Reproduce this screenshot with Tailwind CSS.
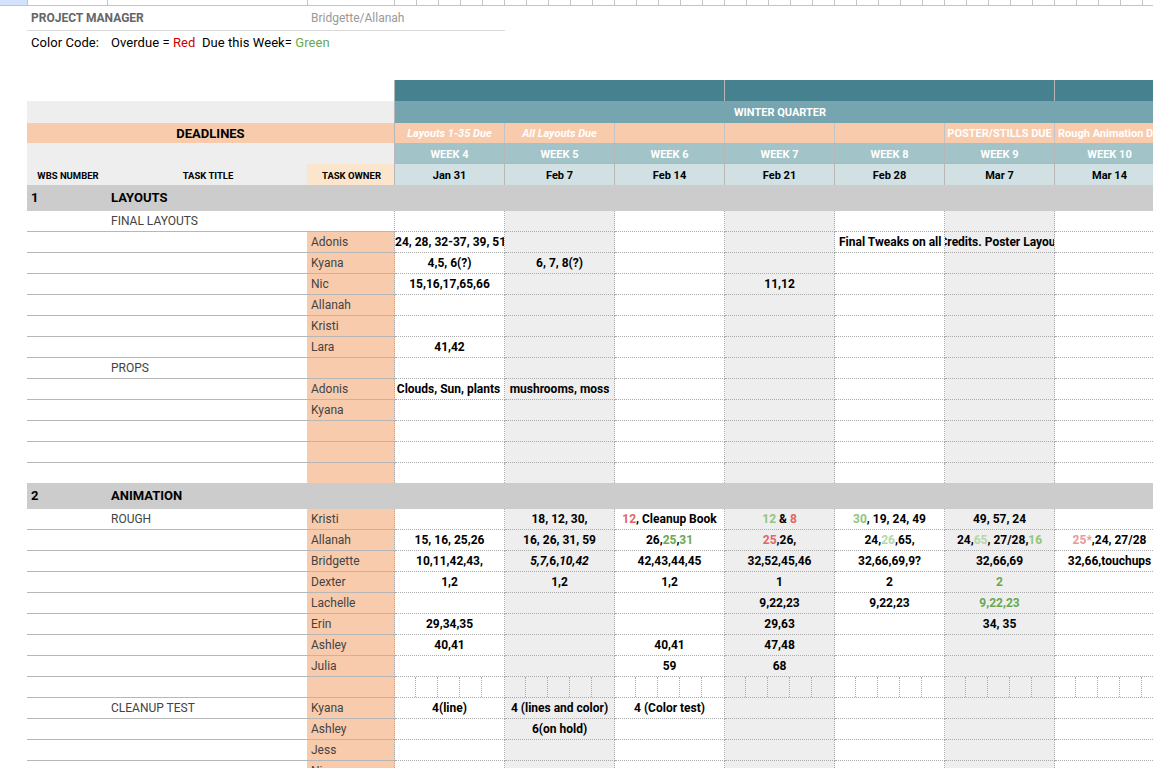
<!DOCTYPE html>
<html lang="en">

<head>
    <meta charset="UTF-8">
    <title>Production Schedule</title>
    <script src="https://cdn.jsdelivr.net/npm/@tailwindcss/browser@4"></script>
</head>

<body class="w-[1153px] h-[768px] overflow-hidden bg-white font-['Roboto',sans-serif] text-[12px] leading-[14px] text-black">
    <!-- frozen column strip -->
    <div class="flex h-[6px] border-b border-[#c4c4c4]">
        <div class="w-[28px] bg-[#d3e3fd] border-r border-[#c4c4c4]"></div>
        <div class="w-[80px] border-r border-[#c4c4c4]"></div>
        <div class="w-[200px] border-r border-[#c4c4c4]"></div>
        <div class="w-[87px] border-r border-[#c4c4c4]"></div>
        <div class="flex-1 bg-[repeating-linear-gradient(to_right,transparent_0,transparent_21px,#c4c4c4_21px,#c4c4c4_22px)]"></div>
    </div>

    <div class="ml-[27px]">
        <!-- project info -->
        <div class="w-[478px] h-[25px] flex items-center border-b border-[#d9d9d9] pl-[4px] text-[#666666]">
            <span class="w-[280px] font-bold">PROJECT MANAGER</span>
            <span class="text-[#999999]">Bridgette/Allanah</span>
        </div>
        <div class="h-[23px] flex items-center pl-[4px] whitespace-pre text-[13px] tracking-[0.06px]"><span class="w-[80px]">Color Code:</span>Overdue = <span class="text-[#cc0000]">Red</span>  Due this Week= <span class="text-[#6aa84f]">Green</span></div>
        <div class="h-[26px]"></div>

        <table class="table-fixed border-separate border-spacing-0 w-[1138px]">
            <colgroup>
                <col class="w-[80px]">
                <col class="w-[200px]">
                <col class="w-[88px]">
                <col class="w-[110px]">
                <col class="w-[110px]">
                <col class="w-[110px]">
                <col class="w-[110px]">
                <col class="w-[110px]">
                <col class="w-[110px]">
                <col class="w-[110px]">
            </colgroup>
            <thead class="[&_td]:p-0 [&_td]:pt-[2px] [&_td]:overflow-hidden [&_td]:whitespace-nowrap [&_td]:text-center">
                <tr class="h-[21px]">
                    <td colspan="3" class="border-r border-[#b7b7b7]"></td>
                    <td colspan="3" class="bg-[#45818e] border-r border-[#b7b7b7]"></td>
                    <td colspan="3" class="bg-[#45818e] border-r border-[#b7b7b7]"></td>
                    <td class="bg-[#45818e]"></td>
                </tr>
                <tr class="h-[22px]">
                    <td colspan="3" class="bg-[#eeeeee] border-r border-[#b7b7b7]"></td>
                    <td colspan="3" class="bg-[#76a5af]"></td>
                    <td class="bg-[#76a5af] text-white font-bold text-[11px]">WINTER QUARTER</td>
                    <td colspan="3" class="bg-[#76a5af]"></td>
                </tr>
                <tr class="h-[20px] text-white font-bold [&_td:nth-child(n+2)]:bg-[#f8cbad] [&_td:nth-child(n+2)]:border-r [&_td:nth-child(n+2)]:border-[#c4c4c4] text-[11px]">
                    <td colspan="3" class="bg-[#f8cbad] text-black text-[13px] border-r border-[#b7b7b7]">DEADLINES</td>
                    <td class="italic">Layouts 1-35 Due</td>
                    <td class="italic">All Layouts Due</td>
                    <td></td>
                    <td></td>
                    <td></td>
                    <td>POSTER/STILLS DUE</td>
                    <td class="text-left! pl-[3px]!">Rough Animation Due</td>
                </tr>
                <tr class="h-[21px] text-white font-bold text-[11px] [&_td:nth-child(n+2)]:pt-[3px] [&_td:nth-child(n+2)]:bg-[#a2c4c9] [&_td:nth-child(n+2)]:border-r [&_td:nth-child(n+2)]:border-b [&_td:nth-child(n+2)]:border-[#b7b7b7]">
                    <td colspan="3" class="bg-[#eeeeee] border-r border-[#b7b7b7]"></td>
                    <td>WEEK 4</td>
                    <td>WEEK 5</td>
                    <td>WEEK 6</td>
                    <td>WEEK 7</td>
                    <td>WEEK 8</td>
                    <td>WEEK 9</td>
                    <td>WEEK 10</td>
                </tr>
                <tr class="h-[21px] font-bold text-[9.5px] [&_td:nth-child(-n+3)]:pl-[2px] [&_td:nth-child(n+4)]:bg-[#d0e0e3] [&_td:nth-child(n+4)]:border-r [&_td:nth-child(n+4)]:border-[#b7b7b7] [&_td:nth-child(n+4)]:text-[11px]">
                    <td class="bg-[#eeeeee]">WBS NUMBER</td>
                    <td class="bg-[#eeeeee]">TASK TITLE</td>
                    <td class="bg-[#fce5cd] border-r border-[#b7b7b7]">TASK OWNER</td>
                    <td>Jan 31</td>
                    <td>Feb 7</td>
                    <td>Feb 14</td>
                    <td>Feb 21</td>
                    <td>Feb 28</td>
                    <td>Mar 7</td>
                    <td>Mar 14</td>
                </tr>
            </thead>
            <tbody class="[&_tr]:h-[21px] [&_td]:p-0 [&_td]:pl-[4px] [&_td]:overflow-hidden [&_td]:whitespace-nowrap [&_td]:border-b [&_td]:border-[#b7b7b7] [&_td]:text-[#434343] [&_td:nth-child(3)]:bg-[#f8cbad] [&_td:nth-child(3)]:border-r [&_td:nth-child(3)]:border-r-[#aaaaaa] [&_td:nth-child(3)]:[border-right-style:dotted]! [&_td:nth-child(n+4)]:border-r [&_td:nth-child(n+4)]:border-dotted [&_td:nth-child(n+4)]:border-[#aaaaaa] [&_td:nth-child(n+4)]:pl-0 [&_td:nth-child(n+4)]:text-center [&_td:nth-child(n+4)]:font-bold [&_td:nth-child(n+4)]:text-black [&_td:nth-child(5)]:bg-[#eeeeee] [&_td:nth-child(7)]:bg-[#eeeeee] [&_td:nth-child(9)]:bg-[#eeeeee]">
                <tr class="h-[26px]! bg-[#cccccc] text-[13px] font-bold">
                    <td class="border-b-0! text-black!">1</td>
                    <td colspan="9" class="border-b-0! text-black!">LAYOUTS</td>
                </tr>
                <tr>
                    <td></td>
                    <td>FINAL LAYOUTS</td>
                    <td class="bg-white!"></td>
                    <td></td><td></td><td></td><td></td><td></td><td></td><td></td>
                </tr>
                <tr>
                    <td></td><td></td><td>Adonis</td>
                    <td>24, 28, 32-37, 39, 51</td>
                    <td></td><td></td><td></td>
                    <td class="text-left! pl-[4px]!">Final Tweaks on all</td>
                    <td><div class="flex justify-center"><span class="shrink-0">Credits. Poster Layout</span></div></td>
                    <td></td>
                </tr>
                <tr>
                    <td></td><td></td><td>Kyana</td>
                    <td>4,5, 6(?)</td><td>6, 7, 8(?)</td>
                    <td></td><td></td><td></td><td></td><td></td>
                </tr>
                <tr>
                    <td></td><td></td><td>Nic</td>
                    <td>15,16,17,65,66</td><td></td><td></td><td>11,12</td>
                    <td></td><td></td><td></td>
                </tr>
                <tr>
                    <td></td><td></td><td>Allanah</td>
                    <td></td><td></td><td></td><td></td><td></td><td></td><td></td>
                </tr>
                <tr>
                    <td></td><td></td><td>Kristi</td>
                    <td></td><td></td><td></td><td></td><td></td><td></td><td></td>
                </tr>
                <tr>
                    <td></td><td></td><td>Lara</td>
                    <td>41,42</td>
                    <td></td><td></td><td></td><td></td><td></td><td></td>
                </tr>
                <tr>
                    <td></td><td>PROPS</td><td></td>
                    <td></td><td></td><td></td><td></td><td></td><td></td><td></td>
                </tr>
                <tr>
                    <td></td><td></td><td>Adonis</td>
                    <td class="pr-[2px]!">Clouds, Sun, plants</td><td>mushrooms, moss</td>
                    <td></td><td></td><td></td><td></td><td></td>
                </tr>
                <tr>
                    <td></td><td></td><td>Kyana</td>
                    <td></td><td></td><td></td><td></td><td></td><td></td><td></td>
                </tr>
                <tr>
                    <td></td><td></td><td></td>
                    <td></td><td></td><td></td><td></td><td></td><td></td><td></td>
                </tr>
                <tr>
                    <td></td><td></td><td></td>
                    <td></td><td></td><td></td><td></td><td></td><td></td><td></td>
                </tr>
                <tr class="h-[20px]! [&>td]:border-b-0!">
                    <td></td><td></td><td></td>
                    <td></td><td></td><td></td><td></td><td></td><td></td><td></td>
                </tr>
                <tr class="h-[26px]! bg-[#cccccc] text-[13px] font-bold">
                    <td class="border-b-0! text-black!">2</td>
                    <td colspan="9" class="border-b-0! text-black!">ANIMATION</td>
                </tr>
                <tr>
                    <td></td><td>ROUGH</td><td>Kristi</td>
                    <td></td>
                    <td>18, 12, 30,</td>
                    <td><span class="text-[#e06666]">12</span>, Cleanup Book</td>
                    <td><span class="text-[#93c47d]">12</span> &amp; <span class="text-[#e06666]">8</span></td>
                    <td><span class="text-[#93c47d]">30</span>, 19, 24, 49</td>
                    <td>49, 57, 24</td>
                    <td></td>
                </tr>
                <tr>
                    <td></td><td></td><td>Allanah</td>
                    <td>15, 16, 25,26</td>
                    <td>16, 26, 31, 59</td>
                    <td>26,<span class="text-[#6aa84f]">25</span>,<span class="text-[#6aa84f]">31</span></td>
                    <td><span class="text-[#e06666]">25</span>,26,</td>
                    <td>24,<span class="text-[#b6d7a8]">26</span>,65,</td>
                    <td>24,<span class="text-[#b6d7a8]">65</span>, 27/28,<span class="text-[#93c47d]">16</span></td>
                    <td><span class="text-[#ea9999]">25*</span>,24, 27/28</td>
                </tr>
                <tr>
                    <td></td><td></td><td>Bridgette</td>
                    <td>10,11,42,43,</td>
                    <td><i>5,7,</i>6,<i>10,42</i></td>
                    <td>42,43,44,45</td>
                    <td>32,52,45,46</td>
                    <td>32,66,69,9?</td>
                    <td>32,66,69</td>
                    <td>32,66,touchups</td>
                </tr>
                <tr>
                    <td></td><td></td><td>Dexter</td>
                    <td>1,2</td><td>1,2</td><td>1,2</td><td>1</td><td>2</td>
                    <td><span class="text-[#6aa84f]">2</span></td>
                    <td></td>
                </tr>
                <tr>
                    <td></td><td></td><td>Lachelle</td>
                    <td></td><td></td><td></td>
                    <td>9,22,23</td><td>9,22,23</td>
                    <td><span class="text-[#6aa84f]">9,22,23</span></td>
                    <td></td>
                </tr>
                <tr>
                    <td></td><td></td><td>Erin</td>
                    <td>29,34,35</td><td></td><td></td>
                    <td>29,63</td><td></td><td>34, 35</td><td></td>
                </tr>
                <tr>
                    <td></td><td></td><td>Ashley</td>
                    <td>40,41</td><td></td><td>40,41</td><td>47,48</td>
                    <td></td><td></td><td></td>
                </tr>
                <tr>
                    <td></td><td></td><td>Julia</td>
                    <td></td><td></td><td>59</td><td>68</td>
                    <td></td><td></td><td></td>
                </tr>
                <!-- row where the sheet's narrow sub columns show through -->
                <tr>
                    <td></td><td></td><td></td>
                    <td><div class="h-[20px] grid grid-cols-[21px_22px_22px_22px_22px] divide-x divide-dotted divide-[#aaaaaa]"><div></div><div></div><div></div><div></div><div></div></div></td>
                    <td><div class="h-[20px] grid grid-cols-[21px_22px_22px_22px_22px] divide-x divide-dotted divide-[#aaaaaa]"><div></div><div></div><div></div><div></div><div></div></div></td>
                    <td><div class="h-[20px] grid grid-cols-[21px_22px_22px_22px_22px] divide-x divide-dotted divide-[#aaaaaa]"><div></div><div></div><div></div><div></div><div></div></div></td>
                    <td><div class="h-[20px] grid grid-cols-[21px_22px_22px_22px_22px] divide-x divide-dotted divide-[#aaaaaa]"><div></div><div></div><div></div><div></div><div></div></div></td>
                    <td><div class="h-[20px] grid grid-cols-[21px_22px_22px_22px_22px] divide-x divide-dotted divide-[#aaaaaa]"><div></div><div></div><div></div><div></div><div></div></div></td>
                    <td><div class="h-[20px] grid grid-cols-[21px_22px_22px_22px_22px] divide-x divide-dotted divide-[#aaaaaa]"><div></div><div></div><div></div><div></div><div></div></div></td>
                    <td><div class="h-[20px] grid grid-cols-[21px_22px_22px_22px_22px] divide-x divide-dotted divide-[#aaaaaa]"><div></div><div></div><div></div><div></div><div></div></div></td>
                </tr>
                <tr>
                    <td></td><td>CLEANUP TEST</td><td>Kyana</td>
                    <td>4(line)</td><td>4 (lines and color)</td><td>4 (Color test)</td>
                    <td></td><td></td><td></td><td></td>
                </tr>
                <tr>
                    <td></td><td></td><td>Ashley</td>
                    <td></td><td>6(on hold)</td>
                    <td></td><td></td><td></td><td></td><td></td>
                </tr>
                <tr>
                    <td></td><td></td><td>Jess</td>
                    <td></td><td></td><td></td><td></td><td></td><td></td><td></td>
                </tr>
                <tr>
                    <td></td><td></td><td>Nic</td>
                    <td></td><td></td><td></td><td></td><td></td><td></td><td></td>
                </tr>
            </tbody>
        </table>
    </div>
</body>

</html>
